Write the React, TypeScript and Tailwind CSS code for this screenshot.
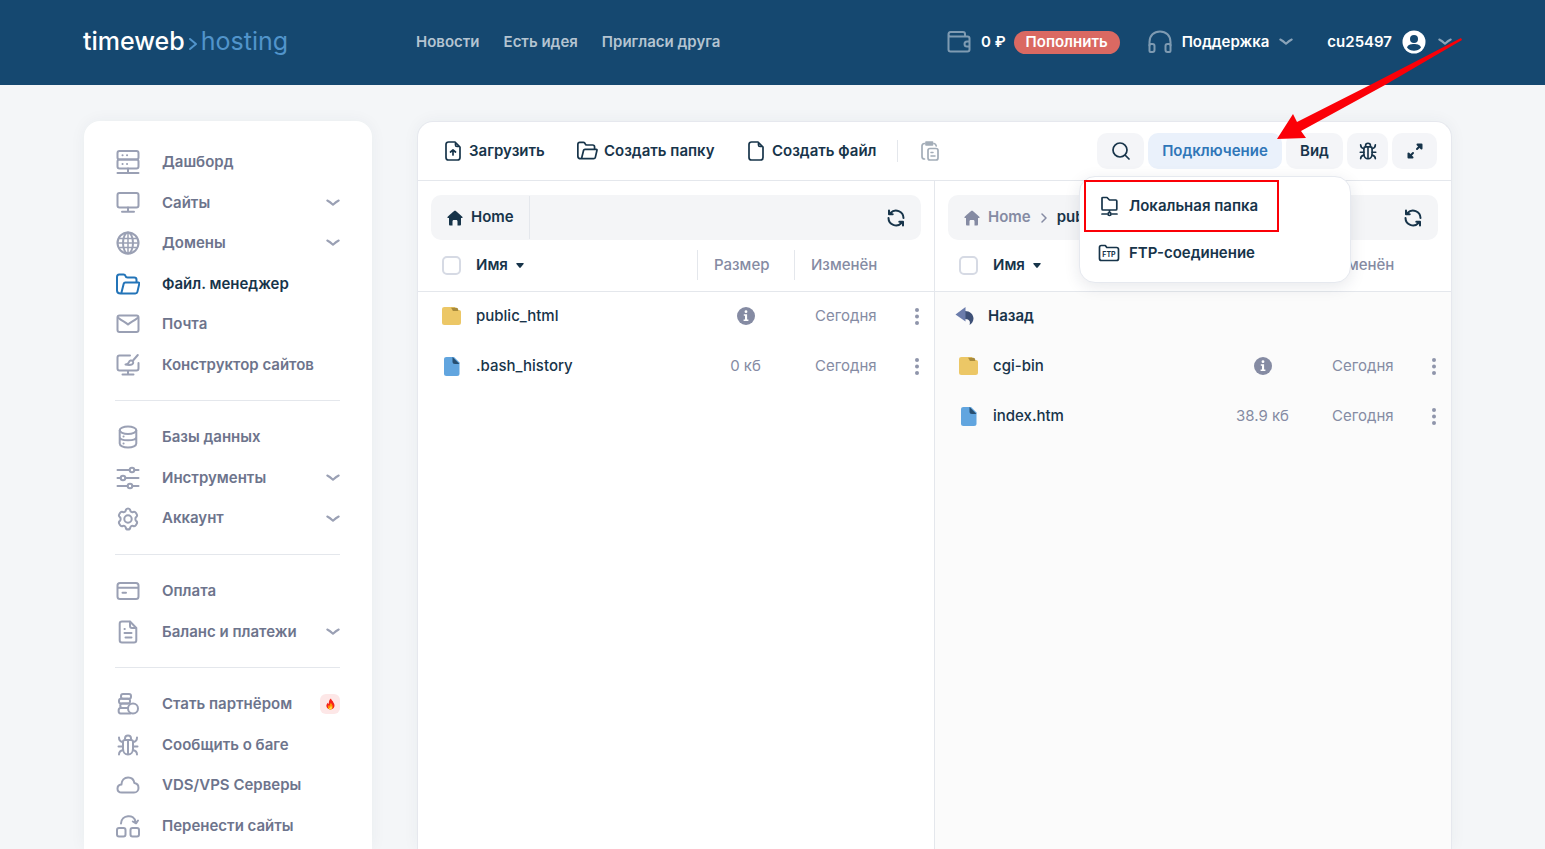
import type { ReactNode } from 'react'

interface IconProps {
  w?: number
  h?: number
  box?: string
  stroke?: number
  className?: string
  children: ReactNode
}

function Icon({ w = 24, h = 24, box, stroke = 2, className = '', children }: IconProps) {
  return (
    <svg
      width={w}
      height={h}
      viewBox={box ?? `0 0 ${w} ${h}`}
      fill="none"
      stroke="currentColor"
      strokeWidth={stroke}
      strokeLinecap="round"
      strokeLinejoin="round"
      className={`shrink-0 ${className}`}
      aria-hidden="true"
    >
      {children}
    </svg>
  )
}

function Chevron({ className = '' }: { className?: string }) {
  return (
    <Icon w={14} h={8} className={className}>
      <path d="M1.3 1.5c2 1 3.6 2.2 5.7 4.2 2.1-2 3.7-3.200 5.700-4.200" />
    </Icon>
  )
}

const BUG = (
  <>
    <path d="M7 8.5C7 7.3 8 7 9 7h6c1 0 2 .3 2 1.5V16c0 3-2 5.500-5 5.500s-5-2.500-5-5.500z" />
    <path d="M9 6.800V5.500a3 3 0 0 1 6 0v1.300M12 7.500V21M2.500 13.500H7M17 13.500h4.500M3 4.500c0 3 1.200 4.200 4 4.700M21 4.500c0 3-1.200 4.200-4 4.700M3 21.500c0-3 1.200-4 4.200-4.500M21 21.500c0-3-1.200-4-4.200-4.500" />
  </>
)

const FOLDER_OPEN = (
  <path d="M4.500 21.500h14.800c1.100 0 1.900-.6 2.100-1.600l1.900-8.300c.1-.6-.2-1.100-.8-1.100H9.300c-.9 0-1.400.4-1.600 1.200L5.300 21.300M4.500 21.500C2.500 21.500 1 20.800 1 18.500V5c0-1.500.7-2.500 2.200-2.500h4.300c1.200 0 1.700.5 2 1.500.3 1.200.9 1.500 2 1.500h6.700c1.500 0 2.300.8 2.300 2.300v2.500" />
)

const ICONS: Record<string, ReactNode> = {
  dashboard: (
    <>
      <rect x="1.500" y="1" width="21" height="8.500" rx="2" />
      <rect x="1.500" y="9.500" width="21" height="9" rx="2" />
      <path d="M12 18.500v4M1.500 23h21" />
      <path d="M6.500 5.300h.1M11 5.300h.1M6.500 14h.1M11 14h.1" />
    </>
  ),
  sites: (
    <>
      <rect x="1.500" y="2" width="21" height="14.500" rx="2" />
      <path d="M12 16.500v4M6 20.800h12" />
    </>
  ),
  domains: (
    <>
      <circle cx="12" cy="12" r="10.500" />
      <ellipse cx="12" cy="12" rx="5" ry="10.500" />
      <path d="M12 1.500v21M1.500 12h21M3 7.500h18M3 16.500h18" strokeWidth="1.500" />
    </>
  ),
  files: FOLDER_OPEN,
  mail: (
    <>
      <rect x="1.500" y="3.500" width="21" height="16.500" rx="2" />
      <path d="M2.500 6c3.500 3 7 4 9.500 6.500 2.500-2.500 6-3.500 9.500-6.500" />
    </>
  ),
  builder: (
    <>
      <path d="M14 2.500H3.500c-1.300 0-2 .7-2 2v11c0 1.300.7 2 2 2h17c1.300 0 2-.7 2-2V10M12 17.500v3.700M6.500 21.500h11" />
      <path d="M21.800 2l-5.200 6M9.500 11.500c2.500-.2 3-1 3.500-2.500.6-1.700 2.700-1.900 3.600-.9 1.200 1.200.7 3.400-1.600 3.700-2 .3-3.500.2-5.500-.3z" />
    </>
  ),
  database: (
    <>
      <ellipse cx="12" cy="5.200" rx="8.300" ry="3.700" />
      <path d="M3.700 5.500v13c0 2.200 3.500 4 8.300 4s8.300-1.800 8.300-4v-13M3.700 12c0 2.100 3.700 3.300 8.300 3.300s8.300-1.200 8.300-3.300" />
      <path d="M7.500 11.500h.1M7.500 18.500h.1" />
    </>
  ),
  tools: (
    <>
      <path d="M1.500 4h12M18.500 4h4M1.500 12h3M9.500 12h13M1.500 20h10M16.500 20h6" />
      <circle cx="16" cy="4" r="2.300" />
      <circle cx="7" cy="12" r="2.300" />
      <circle cx="14" cy="20" r="2.300" />
    </>
  ),
  account: (
    <>
      <circle cx="12" cy="12" r="3.700" />
      <path d="M9.700 3.500c.2-1.400.8-2 2.300-2s2.100.6 2.300 2c.2 1.300 1.500 2 2.800 1.500 1.300-.5 2.200-.2 2.900 1l.7 1.200c.7 1.200.5 2.100-.6 2.900-1 .8-1 3 0 3.800 1.100.8 1.300 1.700.6 2.900l-.7 1.200c-.7 1.200-1.600 1.500-2.900 1-1.300-.5-2.600.2-2.800 1.500-.2 1.400-.8 2-2.300 2s-2.100-.6-2.300-2c-.2-1.300-1.500-2-2.800-1.500-1.300.5-2.200.2-2.900-1l-.7-1.200c-.7-1.200-.5-2.100.6-2.900 1-.8 1-3 0-3.800-1.100-.8-1.300-1.700-.6-2.900L4 6c.7-1.200 1.600-1.500 2.900-1 1.300.5 2.600-.2 2.800-1.500z" />
    </>
  ),
  payment: (
    <>
      <rect x="1.500" y="4" width="21" height="16" rx="2.500" />
      <path d="M2 8.800h20M6.500 13.800h3.500" />
    </>
  ),
  balance: (
    <>
      <path d="M14 1.500H6c-1.500 0-2.300.8-2.300 2.300v16.400c0 1.500.8 2.300 2.300 2.300h12c1.500 0 2.300-.8 2.300-2.300V8z" />
      <path d="M14 1.800V6c0 1.300.7 2 2 2h4M8.500 9h.3M8.500 13h7M9.500 17.500h6" />
    </>
  ),
  partner: (
    <>
      <rect x="5" y="2" width="10" height="4.700" rx="2" />
      <rect x="3" y="6.700" width="11" height="4.700" rx="2" />
      <path d="M12 11.500H6.500c-3 0-3 4.500 0 4.500h5M12 16H4.500C2 16 2 21.500 4.500 21.500h10" />
      <circle cx="17" cy="16.500" r="5" />
    </>
  ),
  bug: BUG,
  cloud: <path d="M5.800 19.500c-2.500 0-4.300-1.600-4.300-3.800 0-2.300 1.600-3.800 3.900-4.100.2-4 2.900-7.100 6.700-7.100 3.400 0 5.800 2.300 6.300 5.600 2.500.4 4.100 2.300 4.100 4.800 0 2.600-1.800 4.600-4.500 4.600z" />,
  transfer: (
    <>
      <rect x="1" y="14" width="8.500" height="8.500" rx="2" />
      <rect x="14.500" y="14" width="8.500" height="8.500" rx="2" />
      <path d="M5 9.500c.3-9 13.500-10 14.500-1.500M16.800 7.500l3.200 1.800L22 6.500" />
    </>
  ),
}

interface NavItem {
  icon: string
  label: string
  more?: boolean
  active?: boolean
  hot?: boolean
}

const NAV_GROUPS: { size: string; items: NavItem[] }[] = [
  {
    size: 'h-[243px]',
    items: [
      { icon: 'dashboard', label: 'Дашборд' },
      { icon: 'sites', label: 'Сайты', more: true },
      { icon: 'domains', label: 'Домены', more: true },
      { icon: 'files', label: 'Файл. менеджер', active: true },
      { icon: 'mail', label: 'Почта' },
      { icon: 'builder', label: 'Конструктор сайтов' },
    ],
  },
  {
    size: 'h-[122px]',
    items: [
      { icon: 'database', label: 'Базы данных' },
      { icon: 'tools', label: 'Инструменты', more: true },
      { icon: 'account', label: 'Аккаунт', more: true },
    ],
  },
  {
    size: 'h-[81px]',
    items: [
      { icon: 'payment', label: 'Оплата' },
      { icon: 'balance', label: 'Баланс и платежи', more: true },
    ],
  },
  {
    size: 'h-[162px]',
    items: [
      { icon: 'partner', label: 'Стать партнёром', hot: true },
      { icon: 'bug', label: 'Сообщить о баге' },
      { icon: 'cloud', label: 'VDS/VPS Серверы' },
      { icon: 'transfer', label: 'Перенести сайты' },
    ],
  },
]

function Flame() {
  return (
    <span className="ml-auto flex size-5 items-center justify-center rounded-md bg-[#fde7e7]">
      <svg width="9" height="12" viewBox="0 0 10 12" aria-hidden="true">
        <path d="M5.500 0C6 2 8 2.800 8.300 4.500 9.500 5.500 10 8.500 8.500 10.500c-1.600 2-5.500 2-7.200 0C-.3 8.500.5 6 2 4.500c.2.800.5 1.200 1 1.500C3.200 3.500 3.500 1.500 5.500 0z" fill="#f5221b" />
        <path d="M5.500 4.500c.5 1.500 2 2.500 2 4.500S6.500 12 4.800 12 2 10.800 2.200 9.200c.1-1 .5-1.500 1.100-2 .2.600.5.900.9 1 0-1.500.4-2.700 1.300-3.700z" fill="#ff9500" />
        <path d="M5.500 8c.8 1 1.200 1.700 1 2.600-.2.900-.9 1.400-1.700 1.400s-1.700-.6-1.500-1.700c.4.300.8.3 1.100.1.500-.6.700-1.400 1.100-2.400z" fill="#ffe14a" />
      </svg>
    </span>
  )
}

function Sidebar() {
  return (
    <aside className="w-[288px] shrink-0 rounded-t-2xl bg-white px-8 pt-[21px] shadow-[0_0_16px_rgba(40,50,80,0.05)]">
      <nav>
        {NAV_GROUPS.map((group, i) => (
          <div key={i}>
            {i > 0 && <hr className="-ml-px mt-[15px] mb-4 border-[#e4e7ec]" />}
            <ul className={`grid auto-rows-fr ${group.size}`}>
              {group.items.map(item => (
                <li key={item.label} className="flex">
                  <a href="#" className={`flex flex-1 items-center text-[15px] font-semibold ${item.active ? 'text-[#17344a]' : 'text-[#6d748c]'}`}>
                    <Icon className={`mr-[22px] ${item.active ? 'text-[#2374b8]' : 'text-[#9aa0b4]'}`}>{ICONS[item.icon]}</Icon>
                    {item.label}
                    {item.more && <Chevron className="ml-auto text-[#9aa0b4]" />}
                    {item.hot && <Flame />}
                  </a>
                </li>
              ))}
            </ul>
          </div>
        ))}
      </nav>
    </aside>
  )
}

function Header() {
  return (
    <header className="bg-[#154870]">
      <div className="flex h-[85px] items-center pr-[93px] pb-px pl-[83px]">
        <a href="#" className="mr-[45px] flex w-[288px] items-center text-[25px] font-medium text-white">
          timeweb
          <Icon w={10} h={14} className="mx-[3px] mt-1 text-[#5194cb]">
            <path d="M2 2l6 5-6 5" />
          </Icon>
          <span className="font-normal text-[#5194cb]">hosting</span>
        </a>
        <nav className="flex gap-6 text-[15px] font-semibold text-[#b4c4d1]">
          <a href="#">Новости</a>
          <a href="#">Есть идея</a>
          <a href="#">Пригласи друга</a>
        </nav>
        <div className="ml-auto flex items-center text-[15px] font-semibold text-white">
          <Icon className="text-[#7f9bb2]">
            <path d="M1.500 4.500v15c0 1.300.7 2 2 2h17c1.300 0 2-.7 2-2V8.500c0-1.300-.7-2-2-2h-17c-2 0-2-1-2-2 0-1.500.7-2.500 2-2.500H16c1.300 0 2 .7 2 2v2.500M22.500 11.500H20c-3.300 0-3.300 5 0 5h2.500z" />
          </Icon>
          <span className="ml-2.5">0 ₽</span>
          <button className="ml-2 h-[23px] w-[106px] rounded-full bg-[#da6962]">Пополнить</button>
          <Icon className="ml-7 text-[#7f9bb2]">
            <path d="M1.500 15.500V12C1.500 5.500 6 1.500 12 1.500S22.500 5.500 22.500 12v3.500" />
            <path d="M1.500 15c0-.7.4-1 1-1h2c1.200 0 2 .8 2 2v4c0 1.200-.8 2-2 2h-2c-.6 0-1-.4-1-1zM22.500 15c0-.7-.4-1-1-1h-2c-1.200 0-2 .8-2 2v4c0 1.200.8 2 2 2h2c.6 0 1-.4 1-1z" />
          </Icon>
          <button className="ml-2.5 flex items-center">
            Поддержка
            <Chevron className="ml-2.5 text-[#8ba4b9]" />
          </button>
          <button className="ml-[34px] flex items-center">
            cu25497
            <svg width="24" height="24" viewBox="0 0 24 24" className="ml-2.5" aria-hidden="true">
              <circle cx="12" cy="12" r="11.500" fill="#fff" />
              <circle cx="12" cy="9" r="4" fill="#154870" />
              <path d="M5 17.500c1-3 4-3.500 7-3.500s6 .5 7 3.500c-1.800 2.300-4.200 3.300-7 3.300s-5.200-1-7-3.300z" fill="#154870" />
            </svg>
            <Chevron className="ml-3 text-[#8ba4b9]" />
          </button>
        </div>
      </div>
    </header>
  )
}

function ConnectionMenu() {
  return (
    <div className="absolute top-[43px] -left-[69px] z-10 w-[272px] rounded-2xl border border-[#e6e9ef] bg-white px-1 pt-[3px] pb-2 shadow-[0_4px_16px_rgba(30,40,70,0.10)]">
      <button className="flex h-[52px] w-[195px] items-center border-2 border-[#fb0007] pl-3 whitespace-nowrap">
        <Icon w={22} h={22} stroke={1.7} className="mr-[9px]">
          <path d="M4 13V3.500C4 2.700 4.300 2.500 5 2.500h4l2.500 2.500h6.300c.7 0 1 .3 1 1v8c0 .7-.3 1-1 1H5c-.7 0-1-.3-1-1zM11.500 15v2.500M4 19h5M14 19h5" />
          <circle cx="11.500" cy="19" r="1.500" />
        </Icon>
        Локальная папка
      </button>
      <button className="flex h-[42px] w-full items-center pl-3.5 whitespace-nowrap">
        <Icon w={22} h={22} stroke={1.7} className="mr-[9px]">
          <path d="M1.500 16.500v-11c0-1.500.5-2 1.800-2h4l1.500 2h9.700c1.300 0 2 .7 2 2v9c0 1.300-.7 2-2 2h-15c-1.300 0-2-.7-2-2z" />
          <text x="11" y="15" textAnchor="middle" fontSize="7" fontWeight="700" fill="currentColor" stroke="none">FTP</text>
        </Icon>
        FTP-соединение
      </button>
    </div>
  )
}

function Toolbar() {
  const soft = 'flex h-9 items-center justify-center rounded-[10px] bg-[#f4f5f8]'
  return (
    <div className="flex h-[59px] items-center border-b border-[#e4e7ec] pr-3.5 pl-[27px] text-[15px] font-semibold">
      <button className="flex w-[132px] items-center">
        <Icon w={16} h={20} stroke={1.7} className="mr-2">
          <path d="M10 1H3.500C2 1 1 2 1 3.500v13C1 18 2 19 3.500 19h9c1.500 0 2.500-1 2.500-2.500V6zM10.500 1.500V4c0 1 .5 1.500 1.500 1.500h2.500M8 14V9M5.500 11L8 9l2.500 2" />
        </Icon>
        Загрузить
      </button>
      <button className="flex w-[171px] items-center">
        <Icon w={21} h={20} box="0 1 24.5 23" className="mr-1.5">{FOLDER_OPEN}</Icon>
        Создать папку
      </button>
      <button className="flex items-center">
        <Icon w={16} h={20} stroke={1.7} className="mr-2">
          <path d="M10 1H3.500C2 1 1 2 1 3.500v13C1 18 2 19 3.500 19h9c1.500 0 2.500-1 2.500-2.500V6zM10.500 1.500V4c0 1 .5 1.500 1.500 1.500h2.500" />
        </Icon>
        Создать файл
      </button>
      <span className="ml-5 h-[22px] w-px bg-[#e4e7ec]" />
      <button className="ml-[23px] text-[#a3adb8]" aria-label="Вставить">
        <Icon w={18} h={20} stroke={1.7}>
          <path d="M3.500 2.500C2 2.700 1 3.500 1 5v10.500C1 17 2 18 3.500 18M13 2.500c1.200.2 2 1 2.200 2.300" />
          <path d="M5 1.200h6.500v2.600H5z" fill="currentColor" />
          <rect x="7" y="7.500" width="10" height="11.500" rx="2" />
          <path d="M10 11.500h2M10 15h4" strokeWidth="1.500" />
        </Icon>
      </button>
      <div className="ml-auto flex gap-1">
        <button className={`${soft} w-[47px]`} aria-label="Поиск">
          <Icon w={18} h={18} stroke={1.7}>
            <circle cx="8" cy="8" r="7" />
            <path d="M13.500 13.500l3.500 3.500" />
          </Icon>
        </button>
        <div className="relative">
          <button className="flex h-9 w-[134px] items-center justify-center rounded-[10px] bg-[#eaf1fb] text-[#2f76b8]">Подключение</button>
          <ConnectionMenu />
        </div>
        <button className={`${soft} w-[57px]`}>Вид</button>
        <button className={`${soft} w-[41px]`} aria-label="Отладка">
          <Icon w={18} h={18} box="1 1 22 22">{BUG}</Icon>
        </button>
        <button className={`${soft} w-[45px]`} aria-label="На весь экран">
          <Icon w={16} h={16}>
            <path d="M10 6l4-4M2 14l4-4" />
            <path d="M10.500 1.500h4v4zM1.500 10.500v4h4z" fill="currentColor" />
          </Icon>
        </button>
      </div>
    </div>
  )
}

function House() {
  return (
    <svg width="16" height="16" viewBox="0 0 16 16" fill="currentColor" className="mr-2" aria-hidden="true">
      <path d="M8 .5c.5 0 5.500 4.500 7.300 6.200.6.600.3 1.300-.5 1.300H14v6.200c0 .8-.4 1.300-1.200 1.300h-2.300v-4c0-1-.5-1.500-1.300-1.500H6.800c-.8 0-1.300.5-1.300 1.500v4H3.200c-.8 0-1.200-.5-1.200-1.300V8h-.8c-.8 0-1.100-.7-.5-1.300C2.500 5 7.500.5 8 .5z" />
    </svg>
  )
}

function FolderIcon() {
  return (
    <svg width="19" height="18" viewBox="0 0 19 18" aria-hidden="true">
      <path d="M2.500 0H13l1.500 3H17c1.300 0 2 .7 2 2v10.500c0 1.700-.8 2.500-2.500 2.500h-14C.8 18 0 17.200 0 15.500v-13C0 .8.800 0 2.500 0z" fill="#ecc766" />
      <path d="M9 .8h5.200c1.300 0 2 .7 2 2V4H12c-1.200 0-1.500-.5-1.800-1.500z" fill="#a98b3c" />
    </svg>
  )
}

function FileIcon() {
  return (
    <svg width="19" height="19" viewBox="0 0 19 19" aria-hidden="true">
      <path d="M4.500 0H12l5.500 5.500v11c0 1.700-.8 2.500-2.500 2.500H4.500C2.800 19 2 18.200 2 16.500v-14C2 .8 2.800 0 4.500 0z" fill="#61a5df" />
      <path d="M10.500 0l7 7H13c-1.700 0-2.500-.8-2.500-2.500z" fill="#274e70" />
    </svg>
  )
}

function Info() {
  return (
    <svg width="18" height="18" viewBox="0 0 18 18" className="mx-auto" aria-hidden="true">
      <circle cx="9" cy="9" r="9" fill="#858ba3" />
      <circle cx="9" cy="4.700" r="1.400" fill="#fff" />
      <path d="M6.800 7.300h3.300v5.200h1.300V14H6.600v-1.500H8V8.800H6.800z" fill="#fff" />
    </svg>
  )
}

interface Entry {
  name: string
  kind: 'dir' | 'file'
  size?: string
}

interface PaneProps {
  path: ReactNode
  entries: Entry[]
  back?: boolean
}

function Pane({ path, entries, back }: PaneProps) {
  return (
    <section className={`flex min-w-0 flex-1 flex-col ${back ? 'border-l border-[#e4e7ec] bg-[#fbfbfb]' : ''}`}>
      <div className="bg-white px-[13px] pt-3.5">
        <div className="flex h-[45px] items-center rounded-[10px] bg-[#f4f5f7] text-[15px] font-semibold">
          {path}
          <button className="mr-4 ml-auto" aria-label="Обновить">
            <Icon w={18} h={18}>
              <path d="M16.500 9a7.500 7.500 0 0 0-13-5M1.500 9a7.500 7.500 0 0 0 13 5M2 1.500v3.700h3.700M16 16.500v-3.700h-3.700" />
            </Icon>
          </button>
        </div>
      </div>
      <table className="w-full table-fixed text-left text-[15px]">
        <colgroup>
          <col className="w-[58px]" />
          <col />
          <col className="w-[97px]" />
          <col className="w-[97px]" />
          <col className="w-[43px]" />
        </colgroup>
        <thead className="border-b border-[#e4e7ec] bg-white text-[#858ba3]">
          <tr className="h-[51px]">
            <th className="pl-6">
              <input
                type="checkbox"
                aria-label="Выбрать все"
                className="block size-[19px] appearance-none rounded-[5px] border-2 border-[#d6dae4] bg-white"
              />
            </th>
            <th className="font-semibold text-[#17344a]">
              <button className="flex items-center gap-2">
                Имя
                <svg width="8" height="5" viewBox="0 0 8 5" fill="currentColor" aria-hidden="true">
                  <path d="M1 0h6c.8 0 1 .6.6 1.100L4.700 4.600c-.4.500-1 .5-1.400 0L.4 1.100C0 .6.200 0 1 0z" />
                </svg>
              </button>
            </th>
            <th className="font-medium"><span className="flex h-[30px] items-center border-l border-[#e4e7ec] pl-4">Размер</span></th>
            <th className="font-medium"><span className="flex h-[30px] items-center border-l border-[#e4e7ec] pl-4">Изменён</span></th>
            <th />
          </tr>
        </thead>
        <tbody className="text-[#858ba3]">
          {back && (
            <tr className="h-[50px]">
              <td colSpan={5} className="pl-5">
                <button className="flex items-center font-semibold text-[#17344a]">
                  <svg width="19" height="18" viewBox="0 0 19 18" className="mr-3.5" aria-hidden="true">
                    <path d="M10 4c5 0 8.500 3.500 8.500 7.500 0 2.500-1.500 5-4 6.500 1-2.800.5-6-4.500-6z" fill="#3e5077" />
                    <path d="M10.500 0v14.500L.5 7.500z" fill="#6b7cab" />
                  </svg>
                  Назад
                </button>
              </td>
            </tr>
          )}
          {entries.map(e => (
            <tr key={e.name} className="h-[50px]">
              <td className="pl-6">{e.kind === 'dir' ? <FolderIcon /> : <FileIcon />}</td>
              <td className="font-medium text-[#17344a]">{e.name}</td>
              <td className="text-center">{e.size ?? <Info />}</td>
              <td className="pl-[21px]">Сегодня</td>
              <td>
                <button className="flex w-full justify-center pl-2" aria-label="Действия">
                  <svg width="4" height="17" viewBox="0 0 4 17" fill="#8f95ab" aria-hidden="true">
                    <circle cx="2" cy="2" r="2" />
                    <circle cx="2" cy="8.500" r="2" />
                    <circle cx="2" cy="15" r="2" />
                  </svg>
                </button>
              </td>
            </tr>
          ))}
        </tbody>
      </table>
    </section>
  )
}

const LEFT: Entry[] = [
  { name: 'public_html', kind: 'dir' },
  { name: '.bash_history', kind: 'file', size: '0 кб' },
]

const RIGHT: Entry[] = [
  { name: 'cgi-bin', kind: 'dir' },
  { name: 'index.htm', kind: 'file', size: '38.9 кб' },
]

function FileManager() {
  return (
    <main className="flex min-w-0 flex-1 flex-col rounded-t-2xl border border-b-0 border-[#e6e8ee] bg-white text-[#17344a] shadow-[0_0_16px_rgba(40,50,80,0.05)]">
      <Toolbar />
      <div className="flex flex-1">
        <Pane
          entries={LEFT}
          path={
            <a href="#" className="flex h-[43px] w-[99px] items-center border-r border-[#e4e7ec] pl-4">
              <House />
              Home
            </a>
          }
        />
        <Pane
          entries={RIGHT}
          back
          path={
            <>
              <a href="#" className="flex items-center pl-4 text-[#858ba3]">
                <House />
                Home
              </a>
              <Icon w={6} h={10} stroke={1.5} className="mx-2.5 text-[#858ba3]">
                <path d="M1 1l4 4-4 4" />
              </Icon>
              <a href="#">public_html</a>
            </>
          }
        />
      </div>
    </main>
  )
}

export default function App() {
  return (
    <div className="relative flex min-h-screen flex-col bg-[#f4f6f8] font-[Inter,sans-serif]">
      <Header />
      <div className="flex flex-1 gap-[45px] pt-9 pr-[93px] pl-[84px]">
        <Sidebar />
        <FileManager />
      </div>
      {/* Pointer to the connection menu */}
      <svg width="185" height="102" viewBox="0 0 185 102" className="pointer-events-none absolute top-[38px] right-[83px] z-20" aria-hidden="true">
        <path d="M184 0L97 45 20 84 16 76 0 101l29-1-5-7 84-46 77-45z" fill="#fb0007" />
      </svg>
    </div>
  )
}
